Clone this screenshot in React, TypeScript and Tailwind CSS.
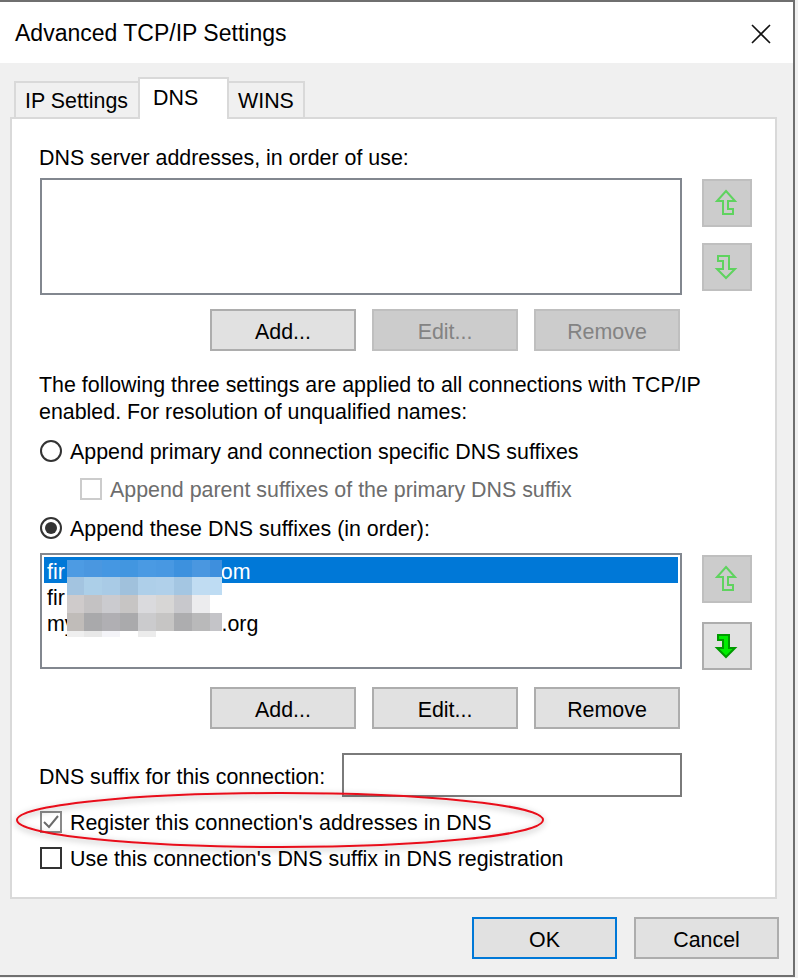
import clsx from 'clsx';

const mosaic = [
  ['bg-[#4d9be3]', 'bg-[#4a97e0]', 'bg-[#4597e2]', 'bg-[#4296e0]', 'bg-[#4a9ae3]', 'bg-[#4898e2]', 'bg-[#3d91de]', 'bg-[#4a97e0]', 'bg-[#3e8fdd]'],
  ['bg-[#a3c4e0]', 'bg-[#accfe8]', 'bg-[#a9cbe6]', 'bg-[#a0c1dc]', 'bg-[#aecfe9]', 'bg-[#b0d0ea]', 'bg-[#a4c6e2]', 'bg-[#c0dcf2]', 'bg-[#bedcf3]'],
  ['bg-[#cfcbcb]', 'bg-[#c4c2c3]', 'bg-[#cbcbcf]', 'bg-[#c7c5c4]', 'bg-[#dadadd]', 'bg-[#d7d6d5]', 'bg-[#c8c8cc]', 'bg-[#ececee]', 'bg-white'],
  ['bg-[#c0bcb9]', 'bg-[#a9a9ab]', 'bg-[#b0afb3]', 'bg-[#aaaaac]', 'bg-[#cbcbcd]', 'bg-[#c6c5c4]', 'bg-[#adadaf]', 'bg-[#b9b9ba]', 'bg-[#c4c4c8]'],
  ['bg-[#efefef]', 'bg-[#e8e8e8]', 'bg-[#f4f4f8]', 'bg-white', 'bg-[#ececec]', 'bg-white', 'bg-white', 'bg-white', 'bg-white'],
];

function WinButton({ label, disabled = false, focused = false, wide = false }: { label: string; disabled?: boolean; focused?: boolean; wide?: boolean }) {
  return (
    <div
      className={clsx(
        'flex h-[42px] items-center justify-center border-2 pt-[4px]',
        wide ? 'w-[146px]' : 'w-[145px]',
        disabled && 'border-[#bfbfbf] bg-[#cccccc] text-[#838383]',
        !disabled && focused && 'border-[#0078d7] bg-[#e1e1e1]',
        !disabled && !focused && 'border-[#adadad] bg-[#e1e1e1]'
      )}
    >
      {label}
    </div>
  );
}

function MoveButton({ dir, enabled = false }: { dir: 'up' | 'down'; enabled?: boolean }) {
  const pts =
    dir === 'up'
      ? '24,12 33,22 26,22 26,30 31,30 31,35 21,35 21,22 15,22'
      : '16,13 27,13 27,26 33,26 24,35 15,26 21,26 21,18 16,18';
  return (
    <div className={clsx('h-[48px] w-[50px] border-2', enabled ? 'border-[#adadad] bg-[#e1e1e1]' : 'border-[#bfbfbf] bg-[#cccccc]')}>
      <svg width="46" height="44" viewBox="2 2 46 44">
        <polygon
          points={pts}
          fill={enabled ? '#00ee00' : 'none'}
          stroke={enabled ? '#009a00' : '#5fd35f'}
          strokeWidth="2"
          strokeLinejoin="miter"
        />
      </svg>
    </div>
  );
}

function Radio({ checked = false }: { checked?: boolean }) {
  return (
    <span className="ml-px mr-[8px] flex h-[22px] w-[22px] shrink-0 items-center justify-center rounded-full border-2 border-[#333333] bg-white">
      {checked && <span className="h-[12px] w-[12px] rounded-full bg-[#333333]" />}
    </span>
  );
}

function Check({ checked = false, tone = 'dark' }: { checked?: boolean; tone?: 'dark' | 'gray' | 'disabled' }) {
  return (
    <span
      className={clsx(
        'mr-[8px] flex h-[22px] w-[22px] shrink-0 items-center justify-center border-2 bg-white',
        tone === 'dark' && 'border-[#333333]',
        tone === 'gray' && 'border-[#8a8a8a]',
        tone === 'disabled' && 'border-[#cccccc]'
      )}
    >
      {checked && (
        <svg width="18" height="18" viewBox="0 0 18 18">
          <path d="M2 9 L7 14 L16 3" fill="none" stroke="#6b6b6b" strokeWidth="2" />
        </svg>
      )}
    </span>
  );
}

export default function App() {
  return (
    <div className="relative h-[978px] w-[798px] overflow-hidden bg-[#f0f0f0] font-['Liberation_Sans',Arial,sans-serif] text-[21.4px] text-black">
      <div className="flex h-[977px] w-[795px] flex-col border-b-2 border-r-2 border-t-2 border-[#6f6f6f]">
        {/* title bar */}
        <div className="flex h-[61px] shrink-0 items-center justify-between bg-white pl-[15px] pr-[22px] pt-[2px]">
          <span className="text-[23px]">Advanced TCP/IP Settings</span>
          <svg width="20" height="20" viewBox="0 0 20 20">
            <path d="M1 1 L19 19 M19 1 L1 19" stroke="#111" strokeWidth="1.6" />
          </svg>
        </div>

        <div className="flex flex-1 flex-col pl-[10px] pr-[14px] pt-[14px]">
          {/* tabs */}
          <div className="relative z-10 flex h-[40px] items-end pl-[4px]">
            <div className="flex h-[36px] w-[126px] items-center border-l-2 border-r-2 border-t-2 border-[#d9d9d9] pl-[9px] pt-[3px]">
              IP Settings
            </div>
            <div className="relative z-10 -mb-[2px] -ml-[2px] flex h-[42px] w-[91px] items-center border-l-2 border-r-2 border-t-2 border-[#d9d9d9] bg-white pb-[2px] pl-[13px]">
              DNS
            </div>
            <div className="-ml-[2px] flex h-[36px] w-[78px] items-center border-l-2 border-r-2 border-t-2 border-[#d9d9d9] pl-[9px] pt-[3px]">
              WINS
            </div>
          </div>

          {/* panel */}
          <div className="flex h-[782px] w-[767px] flex-col border-2 border-[#d9d9d9] bg-white pl-[27px] pt-[26px]">
            <div className="leading-[27px]">DNS server addresses, in order of use:</div>

            <div className="mt-[6px] flex">
              <div className="ml-px h-[117px] w-[642px] border-2 border-[#82878f] bg-white" />
              <div className="ml-[20px] flex flex-col">
                <div className="mt-px">
                  <MoveButton dir="up" />
                </div>
                <div className="mt-[16px]">
                  <MoveButton dir="down" />
                </div>
              </div>
            </div>

            <div className="mt-[14px] flex gap-[16px] pl-[171px]">
              <WinButton label="Add..." wide />
              <WinButton label="Edit..." disabled wide />
              <WinButton label="Remove" disabled wide />
            </div>

            <p className="mt-[21px] whitespace-nowrap leading-[27px]">
              The following three settings are applied to all connections with TCP/IP
              <br />
              enabled. For resolution of unqualified names:
            </p>

            <div className="mt-[11px] flex h-[27px] items-center">
              <Radio />
              <span className="pt-[4px]">Append primary and connection specific DNS suffixes</span>
            </div>
            <div className="mt-[11px] flex h-[27px] items-center pl-[41px] text-[#6d6d6d]">
              <Check tone="disabled" />
              <span className="pt-[4px]">Append parent suffixes of the primary DNS suffix</span>
            </div>
            <div className="mt-[12px] flex h-[27px] items-center">
              <Radio checked />
              <span className="pt-[4px]">Append these DNS suffixes (in order):</span>
            </div>

            <div className="mt-[12px] flex">
              <div className="relative ml-px h-[116px] w-[642px] border-2 border-[#82878f] bg-white p-[2px]">
                <div className="h-[26px] whitespace-nowrap bg-[#0078d7] pl-[3px] leading-[30px] text-white">
                  fir<span className="inline-block w-[156px]" />om
                </div>
                <div className="h-[26px] whitespace-nowrap pl-[3px] leading-[30px]">fir</div>
                <div className="h-[26px] whitespace-nowrap pl-[3px] leading-[30px]">
                  my<span className="inline-block w-[146px]" />.org
                </div>
                {/* pixelated redaction */}
                <div className="absolute left-[25px] top-[5px] grid grid-cols-[17px_18px_18px_18px_18px_18px_18px_18px_12px] grid-rows-[17px_18px_18px_18px_6px]">
                  {mosaic.map((row, r) => row.map((c, i) => <div key={r + '-' + i} className={c} />))}
                </div>
              </div>
              <div className="ml-[20px] flex flex-col">
                <div className="mt-[2px]">
                  <MoveButton dir="up" />
                </div>
                <div className="mt-[19px]">
                  <MoveButton dir="down" enabled />
                </div>
              </div>
            </div>

            <div className="mt-[17px] flex gap-[16px] pl-[171px]">
              <WinButton label="Add..." wide />
              <WinButton label="Edit..." wide />
              <WinButton label="Remove" wide />
            </div>

            <div className="mt-[24px] flex h-[44px] items-center">
              <span className="w-[303px] pt-[4px]">DNS suffix for this connection:</span>
              <div className="h-[44px] w-[340px] border-2 border-[#7a7a7a] bg-white" />
            </div>

            <div className="mt-[11px] flex h-[27px] items-center pl-px">
              <Check checked tone="gray" />
              <span className="pt-[4px]">Register this connection's addresses in DNS</span>
            </div>
            <div className="mt-[9px] flex h-[27px] items-center pl-px">
              <Check />
              <span className="pt-[4px]">Use this connection's DNS suffix in DNS registration</span>
            </div>
          </div>

          <div className="mt-[18px] flex justify-end gap-[17px]">
            <WinButton label="OK" focused />
            <WinButton label="Cancel" />
          </div>
        </div>
      </div>

      {/* red annotation ellipse */}
      <svg className="pointer-events-none absolute left-0 top-[776px]" width="570" height="90" viewBox="0 0 570 90">
        <defs>
          <filter id="sh" x="-10%" y="-40%" width="120%" height="180%">
            <feDropShadow dx="0" dy="2" stdDeviation="3" floodColor="#000" floodOpacity="0.35" />
          </filter>
        </defs>
        <ellipse cx="280" cy="44" rx="263" ry="27" fill="none" stroke="#e8101a" strokeWidth="2" filter="url(#sh)" />
      </svg>
    </div>
  );
}
